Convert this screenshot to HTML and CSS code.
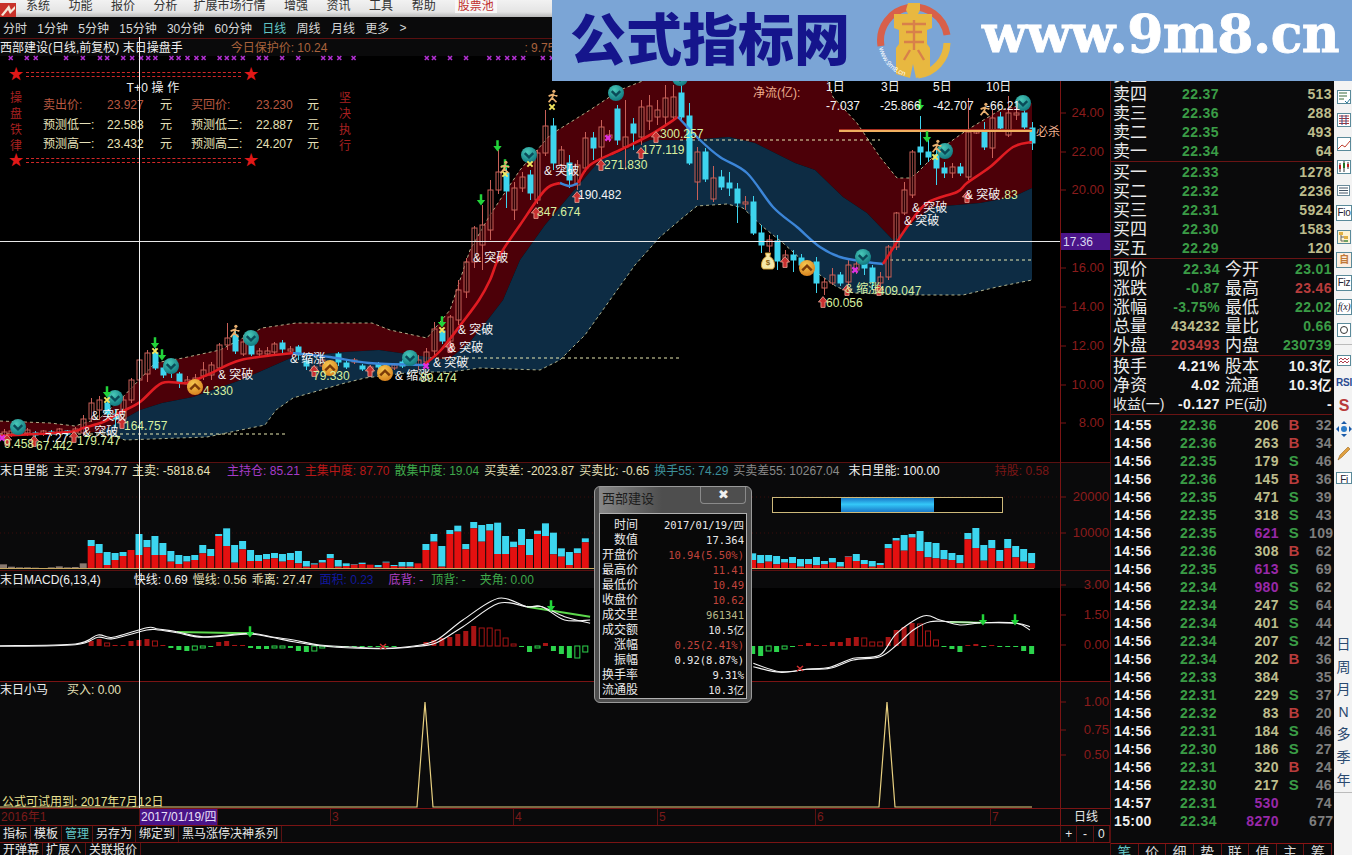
FILE: index.html
```html
<!DOCTYPE html>
<html lang="zh">
<head>
<meta charset="utf-8">
<title>西部建设</title>
<link rel="stylesheet" href="styles.css">
</head>
<body>
<header class="menu">
  <svg class="menu-logo" viewBox="0 0 16 14"><rect width="16" height="14" fill="#c8322a"/><path d="M1 12 L9 2 L11 7 L15 3 L15 6 L10 11 L8 7 L3 13 Z" fill="#f4e8d8"/></svg>
  <span class="m m1">系统</span><span class="m">功能</span><span class="m">报价</span><span class="m">分析</span><span class="m m5">扩展市场行情</span><span class="m">增强</span><span class="m">资讯</span><span class="m">工具</span><span class="m">帮助</span><span class="m pool">股票池</span>
</header>

<main class="main">
  <section class="charts">
    <nav class="periods">
      <span>分时</span><span>1分钟</span><span>5分钟</span><span>15分钟</span><span>30分钟</span><span>60分钟</span><span class="on">日线</span><span>周线</span><span>月线</span><span>更多</span><span>&gt;</span>
    </nav>

    <div class="legend legend-main">
      <span class="w">西部建设(日线,前复权) 末日操盘手</span>
      <span class="lg-protect">今日保护价: 10.24</span>
      <span class="lg-975">: 9.75</span>
    </div>
    <div class="pane">
      <svg id="mainChart" class="plot plot-main" viewBox="0 56 1110 406"></svg>
      <div class="t0">
        <div class="t0-rule"><span class="star">★</span><i class="dbl"></i><span class="star">★</span></div>
        <div class="t0-title">T+0 操 作</div>
        <div class="t0-body">
          <div class="vert"><span>操</span><span>盘</span><span>铁</span><span>律</span></div>
          <div class="t0-grid">
            <span class="r">卖出价:</span><span class="r">23.927</span><span class="y">元</span><span class="r">买回价:</span><span class="r">23.230</span><span class="y">元</span>
            <span class="y">预测低一:</span><span class="y">22.583</span><span class="y">元</span><span class="y">预测低二:</span><span class="y">22.887</span><span class="y">元</span>
            <span class="y">预测高一:</span><span class="y">23.432</span><span class="y">元</span><span class="y">预测高二:</span><span class="y">24.207</span><span class="y">元</span>
          </div>
          <div class="vert"><span>坚</span><span>决</span><span>执</span><span>行</span></div>
        </div>
        <div class="t0-rule"><span class="star">★</span><i class="dbl"></i><span class="star">★</span></div>
      </div>
    </div>

    <div class="legend legend-vol">
      <span class="w">末日里能</span><span class="y">主买: 3794.77</span><span class="y">主卖: -5818.64</span>
      <span class="pu g1">主持仓: 85.21</span><span class="rd">主集中度: 87.70</span><span class="gr">散集中度: 19.04</span><span class="y">买卖差: -2023.87</span><span class="y">买卖比: -0.65</span><span class="tl">换手55: 74.29</span><span class="gy">买卖差55: 10267.04</span><span class="w g6">末日里能: 100.00</span><span class="dr g2">持股: 0.58</span>
    </div>
    <svg id="volChart" class="plot plot-vol" viewBox="0 478 1110 92"></svg>

    <div class="legend legend-macd">
      <span class="w">末日MACD(6,13,4)</span><span class="w g3">快线: 0.69</span><span class="y">慢线: 0.56</span><span class="y">乖离: 27.47</span><span class="bl">面积: 0.23</span><span class="pu2">底背: -</span><span class="gr g7">顶背: -</span><span class="gr g4">夹角: 0.00</span>
    </div>
    <svg id="macdChart" class="plot plot-macd" viewBox="0 588 1110 93"></svg>

    <div class="legend legend-horse">
      <span class="w">末日小马</span><span class="y g5">买入: 0.00</span>
    </div>
    <svg id="horseChart" class="plot plot-horse" viewBox="0 698 1110 110"></svg>

    <div class="dates">
      <span class="d d0">2016年1</span><span class="d d-now">2017/01/19/四</span><span class="d d3"></span><span class="d d4">3</span><span class="d d5">4</span><span class="d d6">5</span><span class="d d7">6</span><span class="d d8">7</span><span class="d d-end">日线</span>
    </div>
    <div class="tabs">
      <span>指标</span><span>模板</span><span class="on">管理</span><span>另存为</span><span>绑定到</span><span>黑马涨停决神系列</span>
      <span class="zoom"><b>+</b><b>-</b><b>0</b></span>
    </div>
    <div class="subtabs"><span>开弹幕</span><span>扩展∧</span><span>关联报价</span></div>

    <i class="axis-line"></i>
    <i class="cross-v"></i>

    <aside class="tip">
      <div class="tip-head"><span class="tip-title">西部建设</span><span class="tip-close">✖</span></div>
      <dl class="tip-body">
        <dt>时间</dt><dd>2017/01/19/四</dd>
        <dt>数值</dt><dd>17.364</dd>
        <dt>开盘价</dt><dd class="r">10.94(5.50%)</dd>
        <dt>最高价</dt><dd class="r">11.41</dd>
        <dt>最低价</dt><dd class="r">10.49</dd>
        <dt>收盘价</dt><dd class="r">10.62</dd>
        <dt>成交里</dt><dd class="k">961341</dd>
        <dt>成交额</dt><dd>10.5亿</dd>
        <dt>涨幅</dt><dd class="r">0.25(2.41%)</dd>
        <dt>振幅</dt><dd>0.92(8.87%)</dd>
        <dt>换手率</dt><dd>9.31%</dd>
        <dt>流通股</dt><dd>10.3亿</dd>
      </dl>
    </aside>
  </section>

  <section class="quote">
    <div class="levels lv-sell">
      <span>卖五</span><b class="gn">22.38</b><b class="k">402</b>
      <span>卖四</span><b class="gn">22.37</b><b class="k">513</b>
      <span>卖三</span><b class="gn">22.36</b><b class="k">288</b>
      <span>卖二</span><b class="gn">22.35</b><b class="k">493</b>
      <span>卖一</span><b class="gn">22.34</b><b class="k">64</b>
    </div>
    <div class="levels lv-buy">
      <span>买一</span><b class="gn">22.33</b><b class="k">1278</b>
      <span>买二</span><b class="gn">22.32</b><b class="k">2236</b>
      <span>买三</span><b class="gn">22.31</b><b class="k">5924</b>
      <span>买四</span><b class="gn">22.30</b><b class="k">1583</b>
      <span>买五</span><b class="gn">22.29</b><b class="k">120</b>
    </div>
    <div class="stats st-price">
      <span>现价</span><b class="gn">22.34</b><span>今开</span><b class="gn">23.01</b>
      <span>涨跌</span><b class="gn">-0.87</b><span>最高</span><b class="rd2">23.46</b>
      <span>涨幅</span><b class="gn">-3.75%</b><span>最低</span><b class="gn">22.02</b>
      <span>总量</span><b class="k">434232</b><span>量比</span><b class="gn">0.66</b>
      <span>外盘</span><b class="rd2">203493</b><span>内盘</span><b class="gn">230739</b>
    </div>
    <div class="stats st-fin">
      <span>换手</span><b class="wt">4.21%</b><span>股本</span><b class="wt">10.3亿</b>
      <span>净资</span><b class="wt">4.02</b><span>流通</span><b class="wt">10.3亿</b>
      <span class="lb-narrow">收益(一)</span><b class="wt">-0.127</b><span class="lb-pe">PE(动)</span><b class="wt">-</b>
    </div>
    <div class="ticks">
      <b class="t">14:55</b><b class="gn">22.36</b><b class="k">206</b><b class="bs rd2">B</b><b class="c">32</b>
      <b class="t">14:56</b><b class="gn">22.36</b><b class="k">263</b><b class="bs rd2">B</b><b class="c">34</b>
      <b class="t">14:56</b><b class="gn">22.35</b><b class="k">179</b><b class="bs gn">S</b><b class="c">46</b>
      <b class="t">14:56</b><b class="gn">22.36</b><b class="k">145</b><b class="bs rd2">B</b><b class="c">36</b>
      <b class="t">14:56</b><b class="gn">22.35</b><b class="k">471</b><b class="bs gn">S</b><b class="c">39</b>
      <b class="t">14:56</b><b class="gn">22.35</b><b class="k">318</b><b class="bs gn">S</b><b class="c">43</b>
      <b class="t">14:56</b><b class="gn">22.35</b><b class="pp">621</b><b class="bs gn">S</b><b class="c">109</b>
      <b class="t">14:56</b><b class="gn">22.36</b><b class="k">308</b><b class="bs rd2">B</b><b class="c">62</b>
      <b class="t">14:56</b><b class="gn">22.35</b><b class="pp">613</b><b class="bs gn">S</b><b class="c">69</b>
      <b class="t">14:56</b><b class="gn">22.34</b><b class="pp">980</b><b class="bs gn">S</b><b class="c">62</b>
      <b class="t">14:56</b><b class="gn">22.34</b><b class="k">247</b><b class="bs gn">S</b><b class="c">64</b>
      <b class="t">14:56</b><b class="gn">22.34</b><b class="k">401</b><b class="bs gn">S</b><b class="c">44</b>
      <b class="t">14:56</b><b class="gn">22.34</b><b class="k">207</b><b class="bs gn">S</b><b class="c">42</b>
      <b class="t">14:56</b><b class="gn">22.34</b><b class="k">202</b><b class="bs rd2">B</b><b class="c">36</b>
      <b class="t">14:56</b><b class="gn">22.33</b><b class="k">384</b><b class="bs"></b><b class="c">35</b>
      <b class="t">14:56</b><b class="gn">22.31</b><b class="k">229</b><b class="bs gn">S</b><b class="c">37</b>
      <b class="t">14:56</b><b class="gn">22.32</b><b class="k">83</b><b class="bs rd2">B</b><b class="c">20</b>
      <b class="t">14:56</b><b class="gn">22.31</b><b class="k">184</b><b class="bs gn">S</b><b class="c">46</b>
      <b class="t">14:56</b><b class="gn">22.30</b><b class="k">186</b><b class="bs gn">S</b><b class="c">27</b>
      <b class="t">14:56</b><b class="gn">22.31</b><b class="k">320</b><b class="bs rd2">B</b><b class="c">24</b>
      <b class="t">14:56</b><b class="gn">22.30</b><b class="k">217</b><b class="bs gn">S</b><b class="c">46</b>
      <b class="t">14:57</b><b class="gn">22.31</b><b class="pp">530</b><b class="bs"></b><b class="c">74</b>
      <b class="t">15:00</b><b class="gn">22.34</b><b class="pp">8270</b><b class="bs"></b><b class="c">677</b>
    </div>
    <div class="qtabs"><span class="on">笔</span><span>价</span><span>细</span><span>势</span><span>联</span><span>值</span><span>主</span><span>筹</span></div>
  </section>

  <section class="tools">
    <div class="tool-icons">
      <svg class="ti" viewBox="0 0 16 16"><rect x="1.5" y="1.5" width="13" height="13" fill="#fff" stroke="#5a8a9a"/><path d="M3 4h8M3 7h8M3 10h5" stroke="#3a6a3a"/><path d="M9 12l2 2 3-4" stroke="#2a7a9a" fill="none"/></svg>
      <svg class="ti" viewBox="0 0 16 16"><rect x="1.5" y="1.5" width="13" height="13" fill="#fff" stroke="#5a8a9a"/><path d="M3 4h10M3 6.5h10M3 9h10M3 11.5h10" stroke="#b03030"/><path d="M6 3v10M10 3v10" stroke="#305090"/></svg>
      <svg class="ti" viewBox="0 0 16 16"><rect x="1.5" y="1.5" width="13" height="13" fill="#fff" stroke="#5a8a9a"/><path d="M2 13l4-4 3 2 5-6" stroke="#c04030" fill="none"/></svg>
      <svg class="ti" viewBox="0 0 16 16"><rect x="1.5" y="1.5" width="13" height="13" fill="#fff" stroke="#5a8a9a"/><path d="M4 4v9M8 2v11M12 3v7" stroke="#333"/><rect x="3" y="6" width="2" height="4" fill="#c02020"/><rect x="7" y="4" width="2" height="5" fill="#207020"/><rect x="11" y="5" width="2" height="3" fill="#c02020"/></svg>
      <svg class="ti" viewBox="0 0 16 16"><rect x="1.5" y="3.5" width="12" height="10" fill="#fff" stroke="#6a8a9a"/><path d="M3 6h9M3 8.5h9M3 11h9" stroke="#456"/></svg>
      <span class="ti tx">Fio</span>
      <svg class="ti" viewBox="0 0 16 16"><rect x="1.5" y="1.5" width="13" height="13" fill="#fdf3d0" stroke="#5a8a9a"/><rect x="3" y="3" width="4" height="3" fill="#e0b040"/><rect x="8" y="7" width="4" height="3" fill="#e0b040"/><rect x="8" y="11" width="4" height="2" fill="#70a060"/><path d="M5 6v6h3M5 8h3" stroke="#666" fill="none"/></svg>
      <span class="ti tx zi">自</span>
      <span class="ti tx">Fiz</span>
      <span class="ti tx fx">f(x)</span>
      <svg class="ti" viewBox="0 0 16 16"><rect x="1.5" y="1.5" width="13" height="13" fill="#fff" stroke="#5a8a9a"/><circle cx="8" cy="8" r="3.5" fill="none" stroke="#333"/></svg>
      <i class="tool-sep"></i>
      <svg class="ti" viewBox="0 0 16 16"><rect x="1.5" y="3.5" width="13" height="10" fill="#fff" stroke="#5a8a9a"/><path d="M3 8l2-2 2 2 2-2 2 2 2-2M3 11l2-2 2 2 2-2 2 2 2-2" stroke="#b04050" fill="none"/></svg>
      <span class="ti rsi">RSI</span>
      <span class="ti dollar">S</span>
      <svg class="ti" viewBox="0 0 16 16"><path d="M8 0l3 3H5zM8 16l3-3H5zM0 8l3-3v6zM16 8l-3-3v6z" fill="#1a5aa8"/><circle cx="8" cy="8" r="3" fill="#2a7ac8"/></svg>
      <svg class="ti" viewBox="0 0 16 16"><path d="M2 15l2-5 8-8 2 2-8 8z" fill="#e0a040" stroke="#a06a20" stroke-width=".6"/></svg>
      <span class="ti tx last">Fi</span>
    </div>
    <div class="tool-periods"><span>日</span><span>周</span><span>月</span><span>N</span><span>多</span><span>季</span><span>年</span></div>
  </section>
</main>

<aside class="banner">
  <span class="bn-cn">公式指标网</span>
  <svg class="bn-logo" viewBox="0 0 80 78">
    <path d="M7 44 A33 33 0 0 1 73 33" fill="none" stroke="#d8604a" stroke-width="7"/>
    <path d="M73 41 A33 33 0 0 1 44 73" fill="none" stroke="#e8b840" stroke-width="7"/>
    <path d="M34 1h12v7l-2 4h14v14l-5 2v14l3 4v26l-14 4-3-14-3 14-14-4V46l3-4V28l-5-2V12h14l-2-4z" fill="#e8b840"/>
    <path d="M28 22h24M32 30h16M30 40h20M36 48l-6 10M44 48l6 10M40 18v30" stroke="#d8804a" stroke-width="2.4" fill="none"/>
    <path id="bnArc" d="M5 46 A36 36 0 0 0 36 75" fill="none"/>
    <text class="bn-arc"><textPath href="#bnArc">www.9m8.cn</textPath></text>
  </svg>
  <span class="bn-url">www.9m8.cn</span>
</aside>
<script src="script.js"></script>
</body>
</html>
```
FILE: styles.css
```css
* { box-sizing: border-box; }
html, body { margin: 0; padding: 0; }
body {
  width: 1352px; height: 855px; overflow: hidden; position: relative;
  background: #000; color: #ddd;
  font-family: "Liberation Sans", "Noto Sans CJK SC", sans-serif;
  font-size: 12px;
}

/* menu */
.menu {
  height: 17px; display: flex; align-items: flex-end; overflow: hidden;
  background: linear-gradient(#f2f2f2, #e4e4e4 70%, #b8b8b8);
  color: #333; padding-bottom: 4px;
}
.menu-logo { width: 16px; height: 14px; flex: none; margin-bottom: -4px; }
.m { line-height: 14px; margin-left: 18.5px; flex: none; }
.m1 { margin-left: 10px; }
.m5 { margin-left: 16px; }
.pool { color: #c03030; background: #f8f8f8; padding: 0 3px; margin-left: 19px; }

.main { display: flex; height: 838px; }

/* chart column */
.charts { width: 1110px; flex: none; position: relative; background: #0a0a0b; overflow: hidden; }
.periods { height: 21px; display: flex; align-items: center; gap: 10.3px; padding-left: 3px; color: #d8d8d8; background: #0a0a0b; }
.periods .on { color: #63c6c6; }
.legend { display: flex; align-items: center; white-space: nowrap; overflow: hidden; line-height: 16px; }
.legend-main { height: 18px; border-top: 1px solid #5a1010; gap: 0; }
.lg-protect { margin-left: 48px; color: #a8623c; }
.lg-975 { margin-left: 197px; color: #a8623c; }
.legend-vol { height: 16px; border-top: 1px solid #5a1010; gap: 5px; }
.legend-macd { height: 18px; border-top: 1px solid #5a1010; gap: 5px; }
.legend-horse { height: 17px; border-top: 1px solid #7a1414; }
.g1 { margin-left: 12px; }
.g2 { margin-left: 50px; }
.g3 { margin-left: 28px; }
.g4 { margin-left: 9px; }
.g5 { margin-left: 19px; }
.g6 { margin-left: 4px; }
.g7 { margin-left: 3px; }
.w { color: #f0f0f0; }
.y { color: #e6e0b8; }
.r { color: #c23c34; }
.pu { color: #a63cc8; }
.pu2 { color: #b040c8; margin-left: 10px; }
.rd { color: #b81818; }
.gr { color: #3fa84a; }
.tl { color: #3c8f9a; }
.gy { color: #8a8a8a; }
.dr { color: #7a1616; }
.bl { color: #12189a; margin-left: 2px; }

.pane { position: relative; height: 406px; }
.plot { display: block; width: 1110px; overflow: visible; }
.plot-main { height: 406px; background: #000; }
.plot-vol { height: 92px; }
.plot-macd { height: 93px; background: #000; }
.plot-horse { height: 110px; }

.plot text { font-family: "Liberation Sans", "Noto Sans CJK SC", sans-serif; font-size: 12px; }
.ax { fill: #8a1c1c; font-size: 13px !important; }
.tk { stroke: #7a1414; }
.grid { stroke: #3a0c0c; stroke-dasharray: 1 3; }
.cloud-red { fill: #4c0008; }
.cloud-blue { fill: #0d2c44; }
.edge { fill: none; stroke: #d8d8a8; stroke-width: .8; stroke-dasharray: 3 3; }
.hline { stroke: #e8e8b0; stroke-width: 1; stroke-dasharray: 3 3; }
.ma-r { fill: none; stroke: #e01c22; stroke-width: 2.6; stroke-linejoin: round; }
.ma-b { fill: none; stroke: #3c86d8; stroke-width: 2.4; stroke-linejoin: round; }
.up { fill: #000; fill-opacity: .35; stroke: #c86058; }
.dn { fill: #3ed4ee; stroke: #3ed4ee; }
.wk-u { stroke: #c86058; }
.wk-d { stroke: #3ed4ee; }
.orange { stroke: #f0b060; stroke-width: 2; }
.orange2 { stroke: #a83020; stroke-width: 1; }
.crossh { stroke: #e8e8e8; }
.pricebox { fill: #4a1488; }
.pricetx { fill: #d8d8f0; font-size: 12px; }
.lb-w { fill: #f4f4f4; }
.lb-n { fill: #d8f0a0; }
.lb-o { fill: #f0b090; }
.xm { stroke: #b030d0; stroke-width: 1.6; }
.vred { fill: #e41010; }
.vcy { fill: #3cd6f0; }
.vgr { fill: #8a7a70; }
.basev { stroke: #c8a860; }
.mr { fill: #a81414; }
.mr-o { fill: none; stroke: #a81414; }
.mg { fill: #2cd44c; }
.mg-o { fill: none; stroke: #2cd44c; }
.ml { fill: none; stroke: #f4f4f4; stroke-width: 1.1; }
.ml-g { fill: none; stroke: #5cd84c; stroke-width: 2; }
.barbox { fill: #000; stroke: #cdb97a; }
.horse { fill: none; stroke: #e8d080; stroke-width: 1.2; }
.trial { fill: #e8e090; }

/* T+0 overlay */
.t0 { position: absolute; left: 8px; top: 10px; width: 251px; color: #ddd; }
.t0-rule { display: flex; align-items: center; height: 16px; }
.star { color: #e01818; font-size: 15px; line-height: 16px; width: 16px; text-align: center; flex: none; }
.dbl { flex: 1; height: 5px; margin: 0 2px; border-top: 1px dashed #d02828; border-bottom: 1px dashed #d02828; }
.t0-title { text-align: center; color: #f0f0f0; height: 12px; line-height: 12px; letter-spacing: .2px; width: 290px; }
.t0-body { display: flex; width: 360px; height: 58px; }
.vert { display: flex; flex-direction: column; width: 16px; height: 64px; color: #a82020; font-size: 12px; line-height: 16px; text-align: center; flex: none; margin-top: -4px; }
.t0-grid { display: grid; grid-template-columns: 64px 53px 31px 65px 51px 30px; grid-auto-rows: 19.5px; margin-left: 19px; width: 294px; flex: none; padding-top: 2px; line-height: 19px; }
.t0-grid .r { color: #b85840; }

/* overlays inside chart column */
.axis-line { position: absolute; left: 1060px; top: 21px; bottom: 29px; width: 1px; background: #7a1414; }
.cross-v { position: absolute; left: 139px; top: 20px; bottom: 47px; width: 1px; background: #f0f0f0; }

/* date / tabs */
.dates { height: 18px; display: flex; border-top: 1px solid #7a1414; border-bottom: 1px solid #7a1414; line-height: 16px; color: #7a1a1a; }
.d { flex: none; border-left: 1px solid #5a1212; padding-left: 1px; }
.d0 { width: 139px; border-left: 0; }
.d-now { width: 78px; background: #4a1488; color: #e8e0f8; }
.d3 { width: 113px; }
.d4 { width: 183px; }
.d5 { width: 144px; }
.d6 { width: 158px; }
.d7 { width: 175px; }
.d8 { width: 70px; }
.d-end { width: 50px; color: #e8e8e8; text-align: center; }
.tabs { height: 17px; display: flex; border-bottom: 1px solid #7a1414; line-height: 16px; color: #e8e8e8; }
.tabs > span { padding: 0 3px; border-right: 1px solid #5a1212; }
.tabs .on { color: #63c6c6; }
.tabs .zoom { margin-left: auto; width: 50px; display: flex; padding: 0; border-left: 1px solid #5a1212; border-right: 0; }
.zoom b { font-weight: 400; flex: 1; text-align: center; border-right: 1px solid #5a1212; }
.subtabs { height: 12px; display: flex; line-height: 15px; color: #e8e8e8; overflow: hidden; }
.subtabs span { padding: 0 3px; border-right: 1px solid #5a1212; }

/* tooltip */
.tip {
  position: absolute; left: 594px; top: 469px; width: 158px; height: 217px;
  background: #4e4e4e; border: 1px solid #9a9a9a; border-radius: 6px; padding: 0 4px;
}
.tip-head { height: 26px; display: flex; justify-content: space-between; }
.tip-title { color: #1c1c1c; font-size: 13px; line-height: 24px; padding: 0 8px 0 3px; background: linear-gradient(90deg, #888, #4e4e4e); }
.tip-close { width: 46px; height: 17px; border: 1px solid #8a8a8a; border-top: 0; border-radius: 0 0 4px 4px; text-align: center; color: #f0f0f0; font-size: 13px; line-height: 15px; margin-right: 1px; }
.tip-body { margin: 0; background: #080808; border: 1px solid #b0b0b0; display: grid; grid-template-columns: 36px 1fr; grid-auto-rows: 15px; padding: 4px 2px 1px 2px; height: 186px; line-height: 15px; }
.tip-body dt { text-align: right; color: #e8e8e8; white-space: nowrap; }
.tip-body dd { margin: 0; text-align: right; color: #e8e8e8; font-family: "DejaVu Sans Mono", "Noto Sans CJK SC", monospace; font-size: 10.5px; white-space: nowrap; }
.tip-body .r { color: #c0443c; }
.tip-body .k { color: #b8b888; }

/* quote */
.quote { width: 224px; flex: none; background: #0a0a0b; padding-top: 49px; padding-right: 2px; overflow: hidden; border-left: 1px solid #5a1010; color: #e8e8e8; }
.quote span { font-size: 17px; line-height: 19px; }
.quote b { font-size: 14px; line-height: 19px; letter-spacing: .4px; text-align: right; white-space: nowrap; }
.gn { color: #3a9c46; }
.k { color: #bcbc8c; }
.rd2 { color: #b83c3c; }
.wt { color: #f0f0f0; }
.pp { color: #9828a8; }
.levels { display: grid; grid-template-columns: 36px 70px 113px; padding-left: 2px; border-bottom: 1px solid #6a1414; }
.lv-sell { height: 96px; }
.lv-buy { height: 97px; padding-top: 1px; }
.stats { display: grid; grid-template-columns: 36px 71px 40px 72px; padding-left: 2px; border-bottom: 1px solid #6a1414; align-content: start; }
.st-price { height: 97px; padding-top: 1px; }
.st-fin { height: 59px; padding-top: 1px; }
.stats span:nth-child(4n+3) { padding-left: 5px; white-space: nowrap; }
.quote .lb-narrow { font-size: 14px; white-space: nowrap; }
.quote .lb-pe { font-size: 14px; white-space: nowrap; }
.ticks { display: grid; grid-template-columns: 36px 67px 62px 30px 23px; grid-auto-rows: 18px; padding: 1px 0 0 3px; height: 428px; }
.ticks b { line-height: 18px; }
.ticks .t { color: #f0f0f0; text-align: left; }
.ticks .bs { text-align: center; font-size: 15px; }
.ticks .c { color: #7e7e7e; }
.qtabs { display: flex; height: 14px; border-top: 1px solid #8a1414; overflow: hidden; }
.qtabs span { flex: 1; text-align: center; font-size: 14px; border-right: 1px solid #6a1414; line-height: 16px; color: #d8d8d8; }
.qtabs .on { color: #63c6c6; }

/* tool strip */
.tools { flex: 1; background: #f3f3f3; display: flex; flex-direction: column; }
.tool-icons { padding: 72px 0 0 1px; display: flex; flex-direction: column; align-items: center; gap: 7.3px; }
.ti { width: 16px; height: 16px; flex: none; display: block; }
.tx { font-size: 10px; line-height: 14px; text-align: center; color: #223; border: 1px solid #5a8a9a; background: #fff; overflow: hidden; letter-spacing: -.3px; }
.zi { color: #c07838; font-weight: 700; background: #fdeee0; }
.fx { font-style: italic; font-family: "Liberation Serif", serif; }
.tool-sep { width: 18px; height: 1px; background: #bbb; margin: -1px 0; flex: none; }
.rsi { font-size: 10px; font-weight: 700; color: #2a4a90; line-height: 16px; text-align: center; width: 18px; letter-spacing: -.3px; }
.dollar { font-size: 16px; font-weight: 700; color: #b83a3a; line-height: 16px; text-align: center; }
.last { height: 12px; margin-top: 4px; }
.tool-periods { margin-top: 149px; display: flex; flex-direction: column; align-items: center; color: #2a4a70; font-size: 14px; line-height: 22.6px; border-bottom: 1px solid #bbb; padding-bottom: 1px; }

/* banner */
.banner {
  position: absolute; left: 552px; top: 0; width: 800px; height: 81px;
  background: #7ba5d6; display: flex; align-items: center;
}
.bn-cn { font-size: 56px; font-weight: 900; color: #15158c; line-height: 81px; margin-left: 18px; width: 304px; flex: none; font-family: "Noto Sans CJK SC", sans-serif; position: relative; top: -5px; }
.bn-logo { width: 80px; height: 78px; flex: none; }
.bn-arc { font-size: 7px; fill: #fff; }
.bn-url { font-family: "DejaVu Serif", serif; font-weight: 700; font-size: 52px; color: #fff; margin-left: 28px; white-space: nowrap; position: relative; top: -7px; letter-spacing: -.5px; -webkit-text-stroke: .8px #fff; }
```
FILE: script.js
```js
const X = i => 3.5 + 7.97 * i;
const pts = a => a.map(p => p[0].toFixed(1) + ',' + p[1].toFixed(1)).join(' ');
/* Catmull-Rom curve through the given points */
const curve = a => {
  let d = `M${a[0][0].toFixed(1)} ${a[0][1].toFixed(1)}`;
  for (let i = 0; i < a.length - 1; i++) {
    const p0 = a[Math.max(i - 1, 0)], p1 = a[i], p2 = a[i + 1], p3 = a[Math.min(i + 2, a.length - 1)];
    const c1 = [p1[0] + (p2[0] - p0[0]) / 6, p1[1] + (p2[1] - p0[1]) / 6];
    const c2 = [p2[0] - (p3[0] - p1[0]) / 6, p2[1] - (p3[1] - p1[1]) / 6];
    d += `C${c1[0].toFixed(1)} ${c1[1].toFixed(1)} ${c2[0].toFixed(1)} ${c2[1].toFixed(1)} ${p2[0].toFixed(1)} ${p2[1].toFixed(1)}`;
  }
  return d;
};

/* ---------- main chart ---------- */
const redTop = [[0,421],[50,423],[75,426],[100,418],[120,400],[141,378],[155,363],[183,358],[220,350],[262,328],[296,323],[372,323],[390,330],[427,338],[450,310],[470,250],[490,215],[520,170],[550,135],[590,110],[620,90],[650,78],[680,58],[820,58],[833,97],[857,123],[880,157],[897,178],[910,178],[917,173],[943,147],[967,130],[1000,110],[1032,103]];
const blueTop = [[0,436],[100,432],[140,410],[162,403],[193,397],[241,380],[293,357],[345,352],[379,350],[414,355],[448,360],[469,343],[490,317],[503,300],[520,260],[545,225],[570,195],[600,160],[650,140],[690,140],[729,137],[755,143],[795,163],[815,170],[843,197],[867,213],[893,240],[907,227],[933,207],[980,203],[1013,197],[1032,188]];
const blueBot = [[100,432],[125,440],[207,437],[265,425],[276,410],[293,398],[345,383],[365,378],[414,372],[450,372],[480,368],[540,370],[560,360],[585,335],[610,300],[635,265],[660,237],[680,220],[697,206],[727,204],[743,208],[763,227],[783,243],[813,270],[837,287],[853,293],[913,295],[963,295],[997,287],[1032,280]];
const maRed1 = [[0,436],[69,432],[83,428],[103,422],[121,412],[140,402],[162,383],[186,383],[207,375],[241,360],[293,353]];
const maBlue1 = [[293,353],[330,357],[369,363],[424,365]];
const maRed2 = [[424,365],[441,350],[462,323],[479,300],[490,280],[500,255],[520,225],[545,190],[560,183]];
const maBlue2 = [[560,183],[570,186],[578,183]];
const maRed3 = [[578,183],[590,165],[620,150],[650,135],[678,117]];
const maBlue3 = [[678,117],[700,140],[720,157],[747,173],[773,207],[797,227],[820,247],[840,257],[867,262],[883,264]];
const maRed4 = [[883,264],[907,227],[927,203],[957,192],[967,183],[990,167],[1013,147],[1032,142]];

/* type, body top, body bottom, wick top, wick bottom */
const candles = [
['u',432,436,429,438],['u',431,434,428,437],['d',432,434,430,436],['u',430,433,428,436],['d',433,435,431,437],['u',431,434,430,436],['d',432,434,430,436],['u',429,433,428,435],['d',431,434,430,436],['u',429,433,427,436],
['u',419,433,415,436],['u',403,419,398,422],['u',400,410,396,420],['d',403,414,400,416],['d',414,419,410,428],['u',400,419,397,428],['u',380,400,378,403],['u',360,380,356,384],['u',353,374,350,382],['d',353,368,348,370],
['d',368,375,366,378],['d',368,372,366,378],['d',374,382,372,388],['u',380,384,376,388],['u',378,384,374,390],['u',370,376,362,380],['u',365,375,362,380],['u',345,368,343,372],['u',338,345,323,350],['d',335,351,330,354],
['u',342,354,335,356],['d',345,354,343,356],['u',351,354,348,356],['u',351,354,347,356],['u',344,352,342,354],['d',343,349,340,353],['u',349,351,346,354],['d',347,355,345,360],['d',361,366,356,370],['u',367,371,365,374],
['u',360,366,356,370],['u',362,365,360,367],['d',354,362,352,366],['d',363,367,360,369],['u',360,362,358,364],['d',366,369,364,371],['u',367,372,365,374],['d',364,367,362,369],['d',366,369,364,371],['u',365,368,363,370],
['d',362,366,360,368],['d',358,361,356,363],['u',360,365,355,370],['u',352,362,348,365],['u',329,351,322,355],['d',331,341,328,344],['u',317,341,315,350],['u',290,320,280,325],['u',262,292,258,298],['u',228,262,226,268],
['u',225,245,205,270],['u',190,230,180,240],['u',172,190,150,194],['d',173,191,168,208],['u',188,210,182,220],['u',177,188,172,192],['d',175,193,170,200],['u',153,200,150,204],['u',126,153,110,156],['d',126,163,118,170],
['u',150,165,146,170],['d',163,180,155,188],['u',165,185,160,190],['u',138,168,132,172],['d',138,148,132,160],['u',127,147,120,158],['u',135,138,130,142],['d',109,140,105,145],['u',137,147,100,170],['d',124,133,118,150],
['u',107,137,100,145],['u',106,121,95,130],['u',110,117,100,125],['u',98,117,85,125],['u',97,117,85,120],['d',93,117,85,120],['d',116,163,103,165],['u',152,182,147,200],['d',152,179,148,182],['u',178,199,166,202],
['d',177,187,170,190],['d',183,188,172,196],['d',189,203,183,223],['u',202,204,196,210],['d',202,233,196,235],['d',233,245,225,253],['u',240,246,235,252],['d',241,261,235,270],['u',255,262,250,266],['d',255,260,250,272],
['d',258,265,254,272],['u',266,270,262,274],['d',262,283,257,293],['u',282,288,278,295],['u',275,283,268,285],['d',275,283,272,286],['u',265,282,260,285],['u',264,270,260,274],['d',263,268,262,275],['d',268,282,265,290],
['u',277,283,272,288],['u',247,277,245,280],['u',213,247,212,250],['u',190,213,182,215],['u',152,195,150,198],['d',147,152,116,165],['d',152,157,140,162],['d',155,168,150,185],['d',168,173,162,178],['u',167,173,163,178],
['d',167,173,163,176],['u',132,177,98,180],['u',131,133,130,134],['d',132,147,122,150],['u',118,148,110,158],['d',117,128,112,130],['u',113,135,96,137],['u',113,115,105,120],['d',113,127,100,130],['d',128,143,122,150]
];

let m = '';
m += '<defs>' +
 '<radialGradient id="gTeal" cx=".4" cy=".3" r=".8"><stop offset="0" stop-color="#48c8b8"/><stop offset="1" stop-color="#0a6e78"/></radialGradient>' +
 '<radialGradient id="gGold" cx=".4" cy=".3" r=".8"><stop offset="0" stop-color="#f6c850"/><stop offset="1" stop-color="#d47a18"/></radialGradient>' +
 '<symbol id="teal" viewBox="-9 -9 18 18" overflow="visible"><circle r="8.5" fill="url(#gTeal)"/><path d="M-4.5 -2 L0 2.5 L4.5 -2" fill="none" stroke="#0a4a58" stroke-width="2.6"/></symbol>' +
 '<symbol id="gold" viewBox="-9 -9 18 18" overflow="visible"><circle r="8.5" fill="url(#gGold)"/><path d="M-5 2.5 L0 -2.5 L5 2.5" fill="none" stroke="#7a3a08" stroke-width="2.6"/></symbol>' +
 '<symbol id="upA" viewBox="-6 -7 12 14" overflow="visible"><path d="M0 -6.5 L5.5 0 L2.5 0 L2.5 6.5 L-2.5 6.5 L-2.5 0 L-5.5 0 Z" fill="#c83030" stroke="#f0b0a0" stroke-width=".9"/></symbol>' +
 '<symbol id="dnA" viewBox="-6 -8 12 16" overflow="visible"><path d="M-1.5 -7 L1.5 -7 L1.5 0 L5 0 L0 6.5 L-5 0 L-1.5 0 Z" fill="#22d43a"/></symbol>' +
 '<symbol id="runner" viewBox="-8 -9 16 18" overflow="visible"><circle cx="1" cy="-6.5" r="1.8" fill="#e8b070"/><path d="M1 -4 L-1 1 L-5 6 M-1 1 L4 6 M0 -3 L5 -1 M0 -3 L-5 -1" stroke="#e8b070" stroke-width="2" fill="none"/></symbol>' +
 '<symbol id="bag" viewBox="-9 -10 18 20" overflow="visible"><path d="M-3 -9 L3 -9 L2 -5 C8 -2 9 8 5 9 L-5 9 C-9 8 -8 -2 -2 -5 Z" fill="#f4e8a8" stroke="#d8a030"/><text x="-2.5" y="5" style="font-size:9px;font-weight:700" fill="#8a6010">$</text></symbol>' +
 '<symbol id="yx" viewBox="-4 -4 8 8" overflow="visible"><path d="M-3 -3 L3 3 M3 -3 L-3 3" stroke="#f4e860" stroke-width="2.2"/></symbol>' +
 '<symbol id="mx" viewBox="-4 -4 8 8" overflow="visible"><path d="M-3 -3 L3 3 M3 -3 L-3 3" stroke="#e030e0" stroke-width="2.6"/></symbol>' +
 '</defs>';

/* magenta crosses strip */
[30,75,100,185,232,280,300,345,370,395,415,435,480,500,525,550,570,615,635,655,680,725,745,790,835,905,925,950,990,1195,1215,1260,1305,1370,1395,1420,1440,1465,1520,1545].forEach(z => {
  const x = z / 2.8;
  m += `<path class="xm" d="M${x-2} 56 L${x+2} 60 M${x+2} 56 L${x-2} 60"/>`;
});

m += `<polygon class="cloud-red" points="${pts(redTop.concat(blueTop.slice().reverse()))}"/>`;
m += `<polygon class="cloud-blue" points="${pts(blueTop.slice(1).concat(blueBot.slice().reverse()))}"/>`;
m += `<polyline class="edge" points="${pts(redTop)}"/>`;
m += `<polyline class="edge" points="${pts(blueBot)}"/>`;

[[0,287,434],[430,680,358],[680,880,140],[890,1032,260]].forEach(h => {
  m += `<line class="hline" x1="${h[0]}" x2="${h[1]}" y1="${h[2]}" y2="${h[2]}"/>`;
});

candles.forEach((c, i) => {
  const x = Math.round(X(i)) + .5;
  const wk = c[0] === 'u' ? 'wk-u' : 'wk-d';
  const cl = c[0] === 'u' ? 'up' : 'dn';
  m += `<line class="${wk}" x1="${x}" x2="${x}" y1="${c[3]}" y2="${c[4]}"/>`;
  m += `<rect class="${cl}" x="${x-2.5}" y="${c[1]}" width="5" height="${Math.max(1, c[2]-c[1])}"/>`;
});

[[maRed1,'ma-r'],[maBlue1,'ma-b'],[maRed2,'ma-r'],[maBlue2,'ma-b'],[maRed3,'ma-r'],[maBlue3,'ma-b'],[maRed4,'ma-r']].forEach(l => {
  m += `<path class="${l[1]}" d="${curve(l[0])}"/>`;
});

m += '<line class="orange2" x1="839" x2="1032" y1="129.5" y2="129.5"/><line class="orange" x1="839" x2="1032" y1="131" y2="131"/>';

/* cross-hair */
m += '<line class="crossh" x1="0" x2="1060" y1="241.5" y2="241.5"/>';

const put = (id, list, w, h) => list.forEach(p => {
  m += `<use href="#${id}" x="${p[0]-w/2}" y="${p[1]-h/2}" width="${w}" height="${h}"/>`;
});

const labels = [
 ['lb-n','9.458',4,448],['lb-w','7.27',45,442],['lb-n','67.442',36,450],['lb-n','179.747',77,445],['lb-w','& 突破',83,436],['lb-w','& 突破',91,420],['lb-n','164.757',124,430],
 ['lb-w','& 突破',218,379],['lb-n','4.330',203,395],['lb-w','& 缩涨',290,363],['lb-n','79.330',313,380],['lb-w','& 缩涨',395,380],['lb-n','89.474',420,382],
 ['lb-w','& 突破',458,334],['lb-w','& 突破',448,352],['lb-w','& 突破',433,367],['lb-w','& 突破',473,262],['lb-w','& 突破',544,175],['lb-n','347.674',537,216],['lb-w','190.482',578,199],['lb-n','271.830',604,169],['lb-n','177.119',642,154],['lb-n','300.257',660,138],
 ['lb-o','净流(亿):',753,97],['lb-w','1日',826,91],['lb-w','3日',881,91],['lb-w','5日',933,91],['lb-w','10日',986,91],['lb-w','-7.037',826,110],['lb-w','-25.866',880,110],['lb-w','-42.707',933,110],['lb-w','-66.21',986,110],['lb-o','必杀',1036,136],
 ['lb-w','& 突破',912,212],['lb-w','& 突破',904,225],['lb-w','& 突破',965,199],['lb-n','.83',1001,199],['lb-n','60.056',826,307],['lb-n','& 缩涨',845,293],['lb-n','409.047',878,295]
];

put('upA', [[7,440],[34,441],[74,437],[122,423],[314,371],[370,371],[450,347],[536,213],[577,197],[601,165],[641,153],[656,137],[785,262],[823,302],[847,290],[879,290],[967,197]], 10, 13);
put('teal', [[18,427],[115,398],[171,366],[251,338],[410,358],[529,155],[616,93],[680,78],[863,257],[945,151],[1023,103]], 17, 17);
put('gold', [[195,387],[330,368],[385,373],[807,268]], 17, 17);
put('bag', [[768,261]], 16, 18);
put('dnA', [[107,392],[155,343],[162,355],[442,322],[481,200],[497.5,146],[505,165],[920,105],[927,137]], 10, 14);
put('yx', [[107,400],[155,351],[442,330],[505,174],[530,164],[552,107],[935,157]], 7, 7);
put('runner', [[235,332],[553,97],[505,168],[937,147],[985,110]], 14, 17);
put('mx', [[2,438],[426,366],[608,138],[855,270]], 7, 7);

labels.forEach(l => { m += `<text class="${l[0]}" x="${l[2]}" y="${l[3]}">${l[1]}</text>`; });

[['24.00',113],['22.00',152],['20.00',190],['16.00',268],['14.00',307],['12.00',346],['10.00',385],['8.00',423]].forEach(a => {
  m += `<text class="ax" x="1104" y="${a[1]+4}" text-anchor="end">${a[0]}</text>`;
  m += `<line class="tk" x1="1060" x2="1066" y1="${a[1]}" y2="${a[1]}"/>`;
});
m += '<rect class="pricebox" x="1061" y="233" width="49" height="17"/><text class="pricetx" x="1063" y="237" dy="9">17.36</text>';
document.getElementById('mainChart').innerHTML = m;

/* ---------- volume ---------- */
const VBASE = 325;
const left = [[313,313],[320,320],[322,322],[322,322],[323,323],[324,324],[322,322],[319,319],[322,322],[321,321],[310,310],
[258,240],[280,252],[315,276],[300,279],[288,276],[270,270],[285,222],[262,240],[285,228],[285,249],[305,273],[312,285],[305,288],[300,285],[280,255],[288,267],[228,222],[258,205],[308,255],[268,243],[303,270],[303,285],[298,282],[295,279],[305,282],[300,279],[310,273],[320,303],[314,310],[308,300],[295,282],[320,300],[318,310],[314,312],[312,308],[314,314],[322,315],[308,305],[318,315],[320,306],[320,306],[310,310],[270,252],[245,222],[320,258],[222,210],[215,197],[268,252],[205,186],[245,195],[212,192],[282,188],[282,228],[262,245],[255,207],[285,237],[222,212],[228,190],[283,218],[290,265],[315,276],[280,265],[247,235]];
const right = [[300,280],[310,285],[305,285],[313,288],[308,297],[310,291],[320,297],[313,297],[316,291],[313,303],[308,294],[320,306],[290,288],[303,282],[312,300],[320,303],[315,309],[265,252],[242,234],[272,225],[233,222],[273,213],[292,246],[295,249],[298,270],[300,279],[310,285],[238,219],[264,204],[302,255],[265,240],[303,270],[265,237],[292,258],[305,267],[310,279]];
const vy = z => 460 + z / 3;
let v = '';
[497,533].forEach(y => { v += `<line class="grid" x1="0" x2="1060" y1="${y}" y2="${y}"/>`; });
v += '<defs><linearGradient id="gBar" x1="0" y1="0" x2="0" y2="1"><stop offset="0" stop-color="#1a78c8"/><stop offset=".45" stop-color="#34c8f8"/><stop offset="1" stop-color="#1a78c8"/></linearGradient></defs>';
v += '<rect class="barbox" x="772.5" y="497.5" width="230" height="15"/><rect x="841" y="498" width="93" height="14" fill="url(#gBar)"/>';
const vbar = (i, r, c) => {
  const x = X(i) - 3.5;
  if (c < r) v += `<rect class="vcy" x="${x}" y="${vy(c)}" width="7" height="${vy(r)-vy(c)}"/>`;
  v += `<rect class="${r > 300 && i < 11 ? 'vgr' : 'vred'}" x="${x}" y="${vy(r)}" width="7" height="${vy(VBASE)-vy(r)}"/>`;
};
left.forEach((b, i) => vbar(i, b[0], b[1]));
right.forEach((b, i) => vbar(94 + i, b[0], b[1]));
v += `<line class="basev" x1="0" x2="1034" y1="568.5" y2="568.5"/>`;
[['20000',497],['10000',533]].forEach(a => {
  v += `<text class="ax" x="1109" y="${a[1]+4}" text-anchor="end">${a[0]}</text><line class="tk" x1="1060" x2="1066" y1="${a[1]}" y2="${a[1]}"/>`;
});
document.getElementById('volChart').innerHTML = v;

/* ---------- MACD ---------- */
const leftM = {11:5,12:7,13:'3h',14:1,15:1,16:5,17:6,18:7,19:'5h',20:1,21:-2,22:-4,23:-5,24:'-4h',25:'-2h',26:-1,27:4,28:5,29:1,30:1,31:-2,32:-3,33:-3,34:'-2h',35:'-2h',36:-2,37:-5,38:-6,39:'-5h',40:'-2h',41:-1,42:-1,43:-1,44:-1,45:-1,46:-1,47:-1,48:-1,49:-1,
 53:4,54:6,55:8,56:9,57:12,58:15,59:20,60:'18h',61:'18h',62:'16h',63:'8h',64:'2h',65:-1,66:-6,67:'-2h',68:3,69:-5,70:-8,71:-12,72:'-12h',73:'-6h'};
const rightM = [-8,-10,'-5h',-6,'-3h',-1,1,3,1,1,4,4,8,9,'8h','4h','4h',9,16,19,23,'22h','15h','6h',-1,-3,-6,1,2,-1,1,-1,-1,-1,-5,-8];
const ZERO = 646;
let c = '';
const mbar = (i, val) => {
  const s = String(val), hollow = s.endsWith('h'), h = parseFloat(s), x = X(i) - 2.5;
  const y = h > 0 ? ZERO - h : ZERO;
  const cls = (h > 0 ? 'mr' : 'mg') + (hollow ? '-o' : '');
  c += `<rect class="${cls}" x="${x}" y="${y}" width="5" height="${Math.abs(h)}"/>`;
};
Object.keys(leftM).forEach(k => mbar(+k, leftM[k]));
rightM.forEach((b, i) => mbar(94 + i, b));
const zl = (a, ox, sx) => a.map(p => [ox + p[0] / sx, 460 + p[1] / 3]);
const lA = zl([[0,557],[200,552],[260,525],[300,532],[390,503],[420,507],[470,515],[540,530],[660,520],[720,530],[780,540],[850,555],[950,562],[1020,565],[1100,558],[1160,540],[1230,480],[1325,415],[1400,440],[1440,440],[1500,470],[1568,490]], 0, 2.657);
const lB = zl([[0,559],[200,554],[260,532],[300,536],[390,510],[420,510],[470,518],[540,532],[660,522],[720,532],[780,545],[850,557],[950,565],[1020,566],[1100,560],[1160,548],[1230,500],[1325,430],[1400,440],[1440,440],[1500,480],[1568,480]], 0, 2.657);
const rA = zl([[10,610],[90,635],[170,628],[240,622],[310,595],[390,585],[440,520],[520,468],[570,480],[630,495],[700,488],[800,490],[840,510]], 750, 3);
const rB = zl([[10,620],[90,637],[170,628],[240,625],[310,600],[390,590],[440,555],[490,510],[540,485],[600,485],[700,488],[800,490],[840,500]], 750, 3);
c += `<polyline class="ml-g" points="${pts(zl([[470,516],[660,520]],0,2.657))}"/><polyline class="ml-g" points="${pts(zl([[1400,440],[1568,470]],0,2.657))}"/><polyline class="ml-g" points="${pts(zl([[600,486],[690,488]],750,3))}"/>`;
[lA, lB, rA, rB].forEach(l => { c += `<path class="ml" d="${curve(l)}"/>`; });
[[250,632],[551,606],[983,620],[1015,620]].forEach(p => { c += `<use href="#dnA" x="${p[0]-5}" y="${p[1]-7}" width="10" height="14"/>`; });
c += '<path d="M380 644l6 5M386 644l-6 5M797 666l6 5M803 666l-6 5" stroke="#d03030" stroke-width="1.5"/>';
[['3.00',585],['1.50',615],['0.00',645]].forEach(a => {
  c += `<text class="ax" x="1109" y="${a[1]+4}" text-anchor="end">${a[0]}</text><line class="tk" x1="1060" x2="1066" y1="${a[1]}" y2="${a[1]}"/>`;
});
document.getElementById('macdChart').innerHTML = c;

/* ---------- horse ---------- */
let h = '<polyline class="horse" points="0,807 417,807 425,702 433,807 879,807 887,702 895,807 1032,807"/>';
h += '<text class="trial" x="2" y="806">公式可试用到: 2017年7月12日</text>';
[['1.00',702],['0.75',730],['0.50',755]].forEach(a => {
  h += `<text class="ax" x="1109" y="${a[1]+4}" text-anchor="end">${a[0]}</text><line class="tk" x1="1060" x2="1066" y1="${a[1]}" y2="${a[1]}"/>`;
});
document.getElementById('horseChart').innerHTML = h;
```
